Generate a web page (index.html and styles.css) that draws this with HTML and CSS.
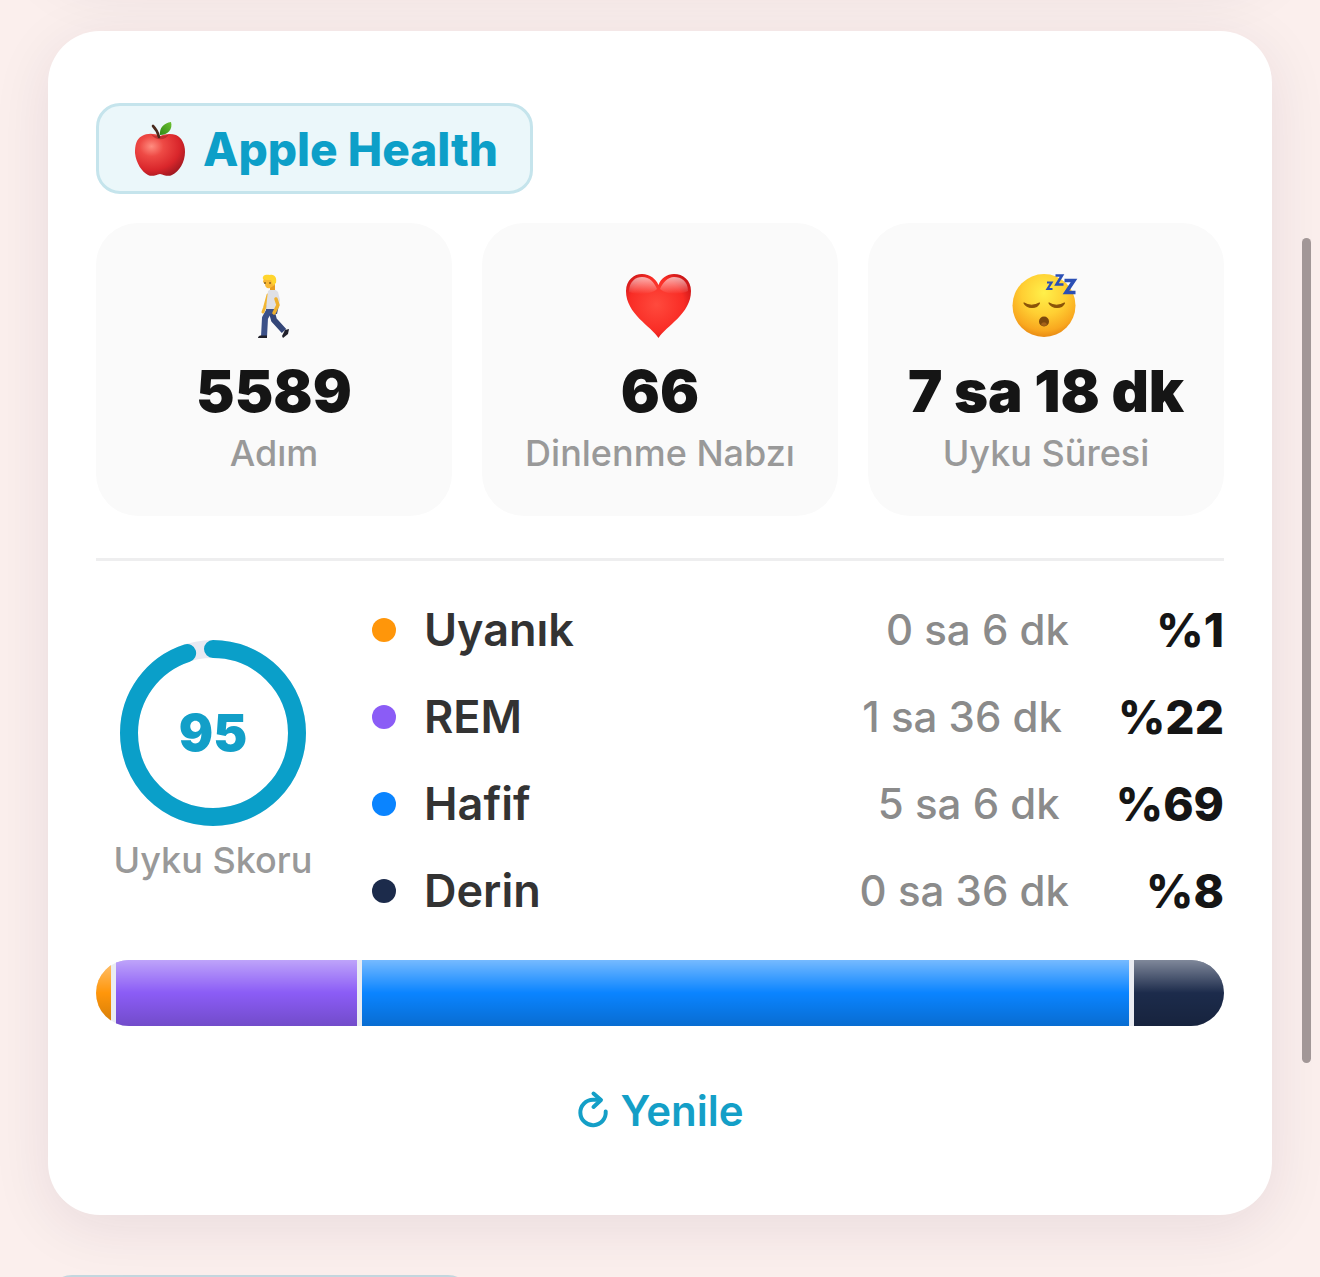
FILE: index.html
```html
<!DOCTYPE html>
<html lang="tr">
<head>
<meta charset="utf-8">
<meta name="viewport" content="width=device-width, initial-scale=1">
<title>Apple Health</title>
<link rel="stylesheet" href="styles.css">
</head>
<body>
<main class="page">
  <section class="card">
    <h1 class="badge">
      <svg class="badge-icon" viewBox="0 0 54 58" aria-hidden="true">
        <defs>
          <radialGradient id="apple" cx=".33" cy=".3" r=".8">
            <stop offset="0" stop-color="#ff8d80"/><stop offset=".3" stop-color="#ee4a45"/><stop offset=".7" stop-color="#d9262b"/><stop offset="1" stop-color="#9c1820"/>
          </radialGradient>
          <linearGradient id="leaf" x1="0" y1="1" x2="1" y2="0">
            <stop offset="0" stop-color="#2f8a16"/><stop offset="1" stop-color="#6cc130"/>
          </linearGradient>
        </defs>
        <path d="M27 16C21 13 14 13 9 16C3 19 2 26 2 33C3 43 9 52 15 55C19 57 23 55 27 54C31 55 35 57 39 55C46 52 52 42 52 32C52 24 49 18 43 15C38 13 31 14 27 16Z" fill="url(#apple)"/>
        <path d="M18 14C21 17 33 17 36 14C33 21 22 21 18 14Z" fill="#8c1a1c" opacity=".45"/>
        <path d="M26 17C25 13 23 9 20 6" fill="none" stroke="#4a2a1d" stroke-width="2.6" stroke-linecap="round"/>
        <path d="M27 15C26 8 31 3 38 2C40 9 35 15 27 15Z" fill="url(#leaf)"/>
      </svg>
      <span>Apple Health</span>
    </h1>

    <ul class="stats">
      <li class="stat">
        <svg class="stat-icon" viewBox="0 0 72 72" aria-hidden="true">
          <path d="M32 38L27 47L26 66" fill="none" stroke="#3c5188" stroke-width="6" stroke-linejoin="round"/>
          <path d="M33 38L36 49L46 60" fill="none" stroke="#344678" stroke-width="6" stroke-linejoin="round"/>
          <path d="M28 34H41L39 43H28Z" fill="#3c5188"/>
          <path d="M30 24L26.500 37L25 41" fill="none" stroke="#f2b632" stroke-width="3" stroke-linecap="round"/>
          <path d="M30 20C33 17 38 18 40 21L42 29L40 38H28L29 28Z" fill="#dfe0e6"/>
          <path d="M38 28L40 34L36 42" fill="none" stroke="#efb02e" stroke-width="3.500" stroke-linecap="round" stroke-linejoin="round"/>
          <path d="M32 12H37V19H32Z" fill="#e89d20"/>
          <path d="M26 6H36L37 14L32 17C29 18 27 16 27 13L25 11Z" fill="#f9b935"/>
          <path d="M25 8C24 4 28 3 32 4C37 3 39 7 38 12L35 14L33 9C30 9 27 9 25 8Z" fill="#ffd52e"/>
          <path d="M26 12H28M31 12H33" stroke="#8a6420" stroke-width="1.500"/>
          <path d="M22 64.500H29V67H20C20 65.500 21 65 22 64.500Z" fill="#20202a"/>
          <path d="M47 59L51 58L50 63L45 67L44 65Z" fill="#20202a"/>
        </svg>
        <strong class="stat-value">5589</strong>
        <span class="stat-label">Adım</span>
      </li>
      <li class="stat">
        <svg class="stat-icon" viewBox="0 0 72 72" aria-hidden="true">
          <defs>
            <radialGradient id="heart" cx=".47" cy=".48" r=".6">
              <stop offset="0" stop-color="#ff4a3d"/><stop offset=".7" stop-color="#f92c25"/><stop offset="1" stop-color="#cb1618"/>
            </radialGradient>
            <linearGradient id="shine" x1="0" y1="0" x2="0" y2="1">
              <stop offset="0" stop-color="#fff" stop-opacity=".65"/><stop offset="1" stop-color="#fff" stop-opacity="0"/>
            </linearGradient>
          </defs>
          <path d="M34.500 67C27 55 2 43 2 20C2 9 10 3 18 3C26 3 32 8 34.500 14C37 7 43 3 50 3C59 3 67 9 67 20C67 43 42 55 34.500 67Z" fill="url(#heart)"/>
          <path d="M5 21C5 10 12 6 18 6C26 6 30 11 33 18C27 24 12 24 5 21ZM36 18C39 11 44 6 50 6C57 6 64 10 64 20C57 24 43 24 36 18Z" fill="url(#shine)"/>
        </svg>
        <strong class="stat-value">66</strong>
        <span class="stat-label">Dinlenme Nabzı</span>
      </li>
      <li class="stat">
        <svg class="stat-icon" viewBox="0 0 72 72" aria-hidden="true">
          <defs>
            <radialGradient id="face" cx=".5" cy=".3" r=".7">
              <stop offset="0" stop-color="#fff04a"/><stop offset=".5" stop-color="#ffcf33"/><stop offset=".85" stop-color="#f9a81f"/><stop offset="1" stop-color="#e98b14"/>
            </radialGradient>
          </defs>
          <circle cx="34" cy="34.500" r="31.500" fill="url(#face)"/>
          <path d="M14 32C17 38 27 38 29.500 32C25 35 18 35 14 32ZM39 32C42 38 52 38 54.500 32C50 35 43 35 39 32Z" fill="#8a5309" stroke="#8a5309" stroke-width="1.200" stroke-linejoin="round"/>
          <circle cx="34" cy="50.500" r="5" fill="#7c480c"/>
          <path d="M31 53.500C32 50.500 36 50.500 37 53.500C35 55.500 33 55.500 31 53.500Z" fill="#a5621a"/>
          <g fill="none" stroke="#2b4fb4">
            <path d="M37 11.500H41.500L37.500 18H42.500" stroke-width="2.200"/>
            <path d="M45.500 4.500H52L46.500 13.500H53.500" stroke-width="2.600"/>
            <path d="M54.500 9.500H64L56 21.500H65.500" stroke-width="3.600"/>
          </g>
        </svg>
        <strong class="stat-value">7 sa 18 dk</strong>
        <span class="stat-label">Uyku Süresi</span>
      </li>
    </ul>

    <div class="sleep">
      <div class="score">
        <div class="ring">
          <svg class="ring-chart" viewBox="0 0 186 186" aria-hidden="true">
            <circle class="ring-track" cx="93" cy="93" r="84"/>
            <circle class="ring-fill" cx="93" cy="93" r="84" pathLength="100" stroke-dasharray="95 100" transform="rotate(-90 93 93)"/>
          </svg>
          <strong class="ring-value">95</strong>
        </div>
        <span class="score-label">Uyku Skoru</span>
      </div>
      <ul class="stages">
        <li class="stage"><i class="dot awake"></i><span class="stage-name">Uyanık</span><span class="stage-time">0 sa 6 dk</span><strong class="stage-share">%1</strong></li>
        <li class="stage"><i class="dot rem"></i><span class="stage-name">REM</span><span class="stage-time">1 sa 36 dk</span><strong class="stage-share">%22</strong></li>
        <li class="stage"><i class="dot light"></i><span class="stage-name">Hafif</span><span class="stage-time">5 sa 6 dk</span><strong class="stage-share">%69</strong></li>
        <li class="stage"><i class="dot deep"></i><span class="stage-name">Derin</span><span class="stage-time">0 sa 36 dk</span><strong class="stage-share">%8</strong></li>
      </ul>
    </div>

    <div class="bar">
      <div class="segment awake" style="flex-grow: 6"></div>
      <div class="segment rem" style="flex-grow: 96"></div>
      <div class="segment light" style="flex-grow: 306"></div>
      <div class="segment deep" style="flex-grow: 36"></div>
    </div>

    <button class="refresh" type="button">
      <svg class="refresh-icon" viewBox="0 0 34 42" aria-hidden="true">
        <path d="M29.700 21.500A12.700 12.700 0 1 1 17 9.800H24"/>
        <path d="M17.500 3.500L25 10L17.500 17"/>
      </svg>
      <span>Yenile</span>
    </button>
  </section>
  <div class="next"><div class="next-badge"></div></div>
</main>
<div class="scroll-thumb"></div>
</body>
</html>
```

FILE: styles.css
```css
* {
  box-sizing: border-box;
}

body {
  margin: 0;
  background: #fbefed;
  color: #151515;
  font-family: Inter, "Noto Sans", sans-serif;
}

ul {
  list-style: none;
  margin: 0;
  padding: 0;
}

.page {
  position: relative;
  padding: 31px 48px 0;
  overflow: hidden;
}

/* lower edge of the card scrolled off above */
.page::before {
  content: "";
  position: absolute;
  left: 48px;
  right: 48px;
  top: -230px;
  height: 200px;
  border-radius: 52px;
  box-shadow: 0 12px 60px rgba(40, 20, 70, 0.1);
}

.card {
  position: relative;
  display: flex;
  flex-direction: column;
  padding: 72px 48px 77px;
  border-radius: 52px;
  background: #fff;
  box-shadow: 0 12px 60px rgba(40, 20, 70, 0.09);
}

.badge {
  display: flex;
  align-items: center;
  align-self: flex-start;
  gap: 16px;
  height: 91px;
  margin: 0 0 29px;
  padding: 0 32px 0 34px;
  border: 3px solid #c5e4ec;
  border-radius: 24px;
  background: #ebf7fa;
  color: #0d9fc8;
  font-size: 46px;
  font-weight: 800;
  line-height: 54px;
}

.badge-icon {
  width: 54px;
  height: 58px;
}

.stats {
  display: grid;
  grid-template-columns: repeat(3, 1fr);
  gap: 30px;
}

.stat {
  display: flex;
  flex-direction: column;
  align-items: center;
  padding: 48px 0 41px;
  border-radius: 42px;
  background: #fafafa;
  white-space: nowrap;
}

.stat-icon {
  width: 72px;
  height: 72px;
}

.stat-value {
  margin: 16px 0 8px;
  font-size: 58px;
  font-weight: 900;
  line-height: 64px;
}

.stat-label,
.score-label {
  color: #999;
  font-size: 36px;
  font-weight: 500;
  line-height: 44px;
  white-space: nowrap;
}

.sleep {
  display: flex;
  align-items: center;
  gap: 42px;
  margin-top: 42px;
  padding: 42px 0;
  border-top: 3px solid #eeeeef;
}

.score {
  display: flex;
  flex-direction: column;
  align-items: center;
  gap: 12px;
  width: 234px;
}

.ring {
  display: grid;
  place-items: center;
}

.ring-chart,
.ring-value {
  grid-area: 1 / 1;
}

.ring-chart {
  width: 186px;
  height: 186px;
}

.ring-track,
.ring-fill {
  fill: none;
  stroke: #e8e9f2;
  stroke-width: 18;
}

.ring-fill {
  stroke: #0a9fc9;
  stroke-linecap: round;
}

.ring-value {
  color: #129fc8;
  font-size: 51px;
  font-weight: 900;
  line-height: 60px;
}

.stages {
  display: flex;
  flex: 1;
  flex-direction: column;
  gap: 33px;
}

.stage {
  display: flex;
  align-items: center;
  line-height: 54px;
  white-space: nowrap;
}

.dot {
  width: 24px;
  height: 24px;
  margin-right: 28px;
  border-radius: 50%;
}

.awake {
  background-color: #ff960a;
}

.rem {
  background-color: #8b5cf6;
}

.light {
  background-color: #0a84ff;
}

.deep {
  background-color: #1c2b4b;
}

.stage-name {
  flex: 1;
  color: #333;
  font-size: 45px;
  font-weight: 600;
}

.stage-time {
  color: #8b8b8b;
  font-size: 42px;
  font-weight: 500;
}

.stage-share {
  min-width: 99px;
  margin-left: 56px;
  font-size: 46px;
  font-weight: 800;
  text-align: right;
}

.bar {
  display: flex;
  gap: 5px;
  height: 66px;
  border-radius: 33px;
  background: #eaecf2;
  overflow: hidden;
}

.segment {
  flex-basis: 0;
  background-image: linear-gradient(rgba(255, 255, 255, 0.44), rgba(255, 255, 255, 0) 50%, rgba(0, 0, 0, 0) 50%, rgba(0, 0, 0, 0.18));
}

.refresh {
  display: flex;
  align-items: center;
  align-self: center;
  gap: 10px;
  margin-top: 58px;
  padding: 0;
  border: 0;
  background: none;
  color: #149fc7;
  font: 600 42px/54px Inter, "Noto Sans", sans-serif;
}

.refresh-icon {
  width: 34px;
  height: 42px;
  fill: none;
  stroke: currentColor;
  stroke-width: 4;
  stroke-linecap: round;
  stroke-linejoin: round;
}

.next {
  height: 2px;
  margin-top: 60px;
  overflow: hidden;
}

.next-badge {
  width: 424px;
  height: 91px;
  border: 3px solid #c3d7df;
  border-radius: 24px;
}

.scroll-thumb {
  position: fixed;
  top: 238px;
  right: 9px;
  width: 9px;
  height: 825px;
  border-radius: 5px;
  background: #a29797;
}
```
